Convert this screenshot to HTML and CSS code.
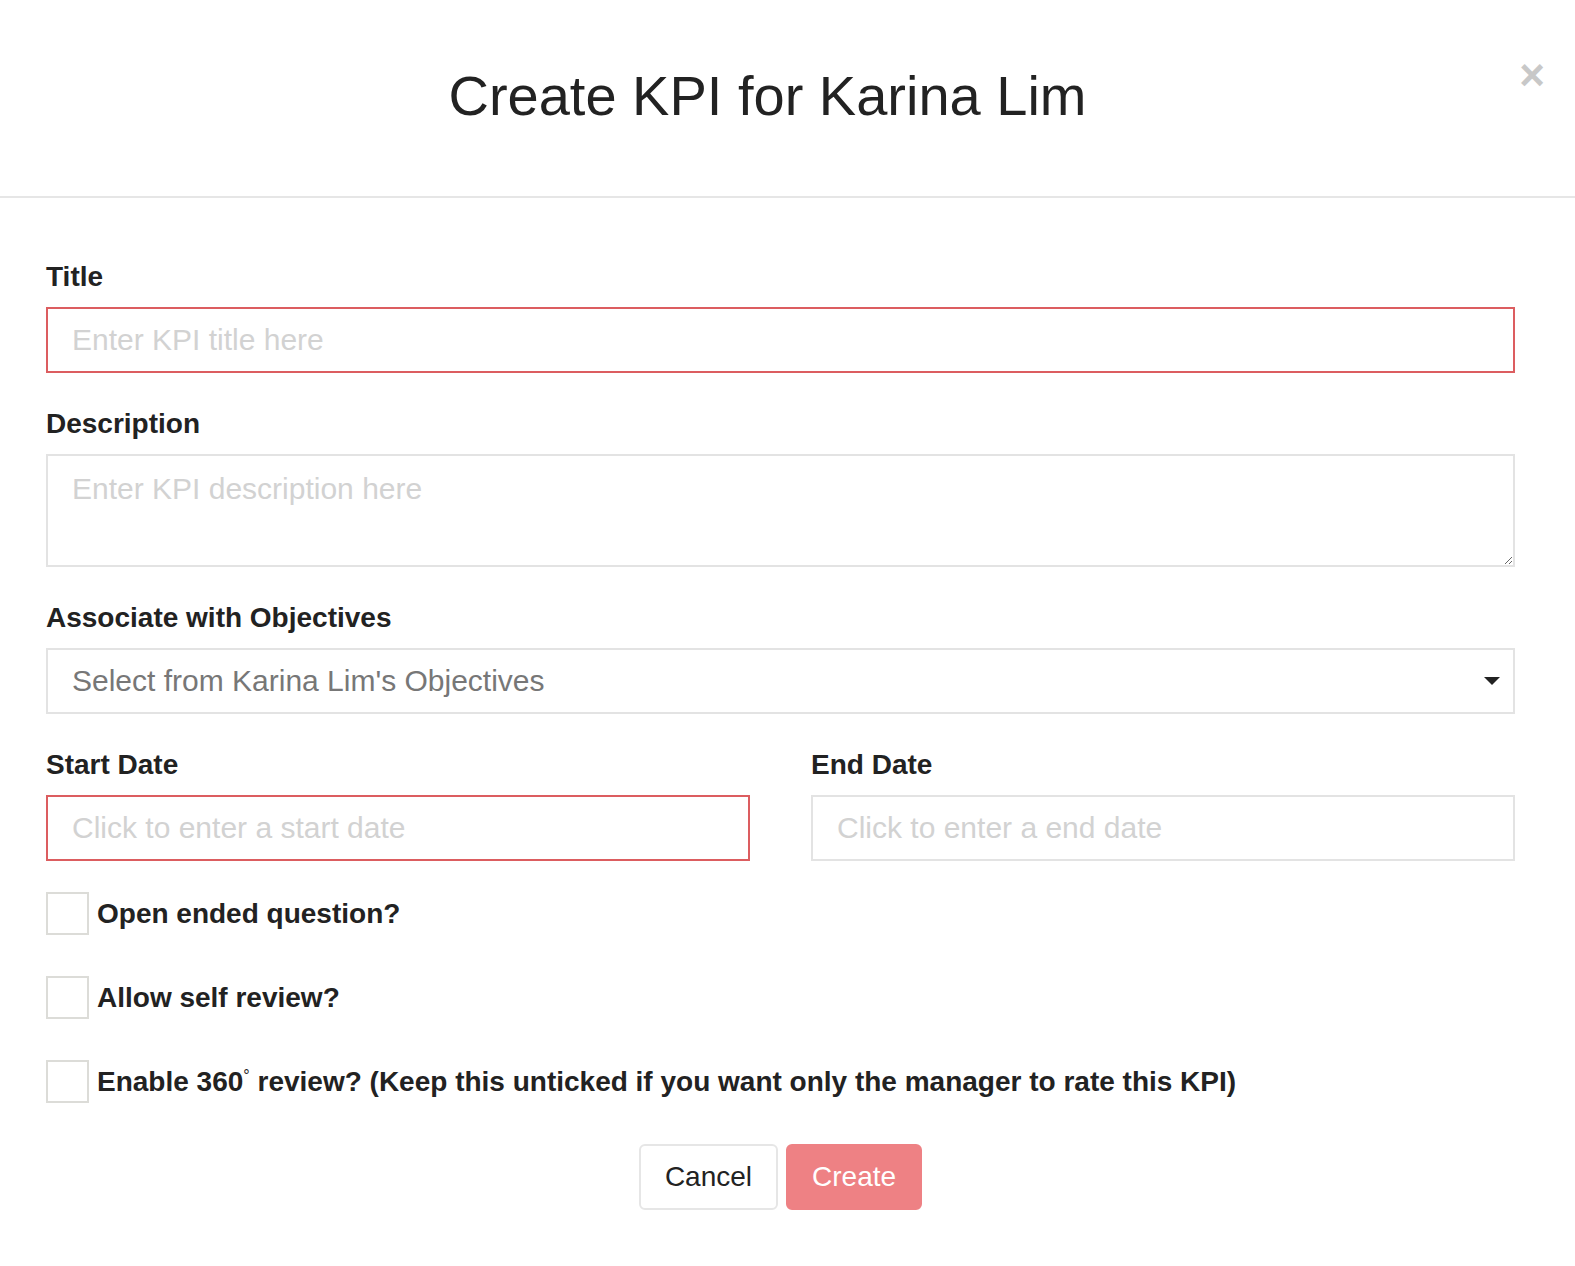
FILE: index.html
```html
<!DOCTYPE html>
<html lang="en">
<head>
    <meta charset="UTF-8">
    <meta name="viewport" content="width=device-width, initial-scale=1.0">
    <title>Create KPI</title>
    <link rel="stylesheet" href="styles.css">
</head>
<body>
    <div class="modal">
        <div class="modal-header">
            <h1>Create KPI for Karina Lim</h1>
            <span class="close">&times;</span>
        </div>

        <div class="modal-body">
            <div class="form-group">
                <label for="title">Title</label>
                <input type="text" id="title" class="invalid" placeholder="Enter KPI title here">
            </div>

            <div class="form-group">
                <label for="description">Description</label>
                <textarea id="description" placeholder="Enter KPI description here"></textarea>
            </div>

            <div class="form-group">
                <label for="objectives">Associate with Objectives</label>
                <div class="select">
                    <span>Select from Karina Lim's Objectives</span>
                    <span class="caret"></span>
                </div>
            </div>

            <div class="flex-row">
                <div class="form-group">
                    <label for="startDate">Start Date</label>
                    <input type="text" id="startDate" class="invalid" placeholder="Click to enter a start date">
                </div>
                <div class="form-group">
                    <label for="endDate">End Date</label>
                    <input type="text" id="endDate" placeholder="Click to enter a end date">
                </div>
            </div>

            <div class="check">
                <span class="box"></span>
                <span>Open ended question?</span>
            </div>
            <div class="check">
                <span class="box"></span>
                <span>Allow self review?</span>
            </div>
            <div class="check">
                <span class="box"></span>
                <span>Enable 360<sup>&deg;</sup> review? (Keep this unticked if you want only the manager to rate this KPI)</span>
            </div>

            <div class="actions">
                <button class="btn">Cancel</button>
                <button class="btn btn-primary">Create</button>
            </div>
        </div>
    </div>
</body>
</html>
```

FILE: styles.css
```css
:root {
    --text-color: #222;
    --border-color: #e3e3e3;
    --error-color: #dc5d60;
    --primary-color: #ee8184;
}

body {
    font-family: 'Liberation Sans', Arial, Helvetica, sans-serif;
    color: var(--text-color);
    background-color: white;
    margin: 0;
}

.modal-header {
    position: relative;
    height: 198px;
    border-bottom: 2px solid #e6e6e6;
    display: flex;
    align-items: center;
    justify-content: center;
    padding-right: 40px;
    box-sizing: border-box;
}

.modal-header h1 {
    margin: 0 0 6px 0;
    font-size: 56px;
    font-weight: normal;
}

.close {
    position: absolute;
    right: 30px;
    top: 53px;
    font-size: 44px;
    font-weight: bold;
    color: #c8c8c8;
    line-height: 1;
}

.modal-body {
    padding: 61px 60px 40px 46px;
}

.form-group {
    margin-bottom: 33px;
}

label {
    display: block;
    font-size: 28px;
    font-weight: bold;
    line-height: 36px;
    margin-bottom: 12px;
}

input, textarea, .select {
    display: block;
    width: 100%;
    box-sizing: border-box;
    height: 66px;
    padding: 0 24px;
    border: 2px solid var(--border-color);
    font-family: inherit;
    font-size: 30px;
    color: var(--text-color);
    background: white;
    outline: none;
}

input::placeholder, textarea::placeholder {
    color: #d2d2d2;
}

input.invalid {
    border-color: var(--error-color);
}

textarea {
    height: 113px;
    padding-top: 16px;
    resize: vertical;
}

.select {
    display: flex;
    align-items: center;
    justify-content: space-between;
    padding-right: 13px;
    color: #777;
}

.caret {
    width: 0;
    height: 0;
    border-left: 8px solid transparent;
    border-right: 8px solid transparent;
    border-top: 8px solid #222;
}

.flex-row {
    display: flex;
    gap: 61px;
}

.flex-row .form-group {
    flex: 1;
    margin-bottom: 31px;
}

.check {
    display: flex;
    align-items: center;
    gap: 8px;
    height: 43px;
    margin-bottom: 41px;
    font-size: 28px;
    font-weight: bold;
}

.box {
    width: 43px;
    height: 43px;
    box-sizing: border-box;
    border: 2px solid #dcdcd8;
    flex-shrink: 0;
}

.check sup {
    font-size: 16px;
    font-weight: normal;
}

.actions {
    display: flex;
    justify-content: center;
    gap: 8px;
}

.btn {
    height: 66px;
    padding: 0 24px;
    font-family: inherit;
    font-size: 28px;
    color: var(--text-color);
    background: white;
    border: 2px solid #e6e6e6;
    border-radius: 6px;
    cursor: pointer;
}

.btn-primary {
    background-color: var(--primary-color);
    border-color: var(--primary-color);
    color: white;
}
```
